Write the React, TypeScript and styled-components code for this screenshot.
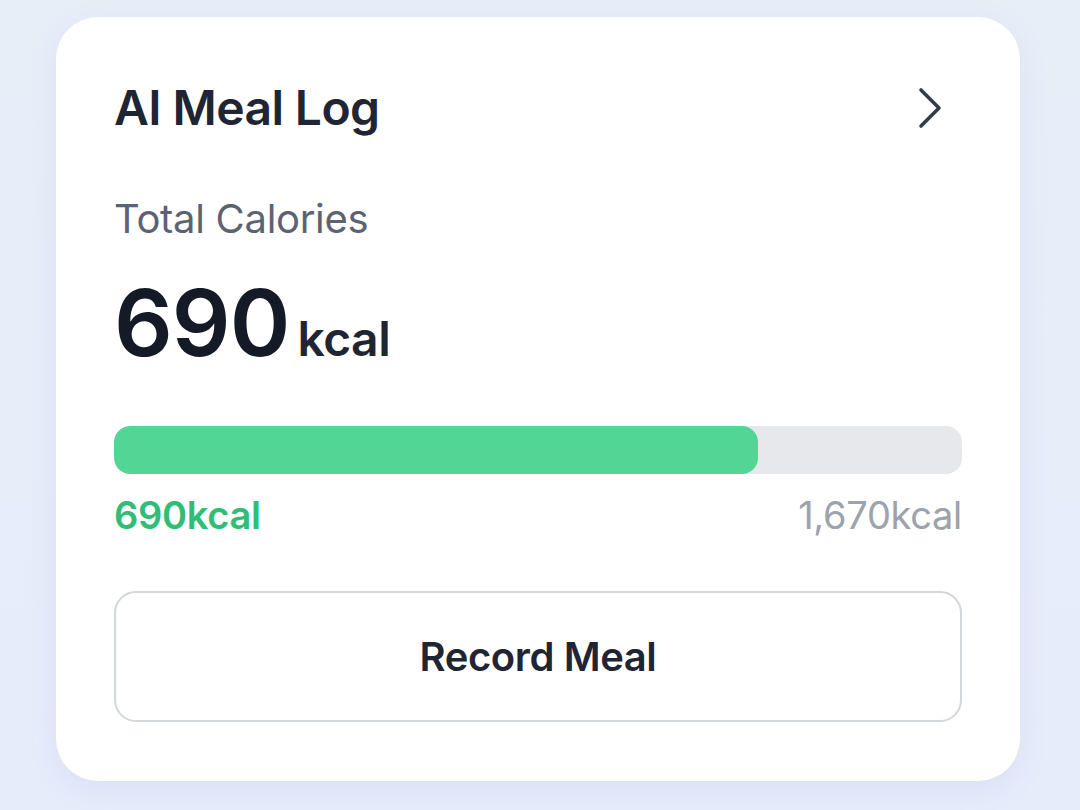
import React from "react";
import styled, { createGlobalStyle } from "styled-components";

const GlobalStyle = createGlobalStyle`
  html, body {
    margin: 0;
    padding: 0;
  }
  body {
    font-family: "Inter", "Noto Sans", sans-serif;
    background: linear-gradient(180deg, #e8eef8 0%, #e7ecfb 100%);
  }
`;

const Page = styled.div`
  width: 1080px;
  height: 810px;
  box-sizing: border-box;
  padding: 17px 60px 30px 56px;
  display: flex;
  flex-direction: column;
`;

const Card = styled.div`
  background: #ffffff;
  border-radius: 42px;
  box-shadow: 0 8px 28px rgba(120, 140, 200, 0.12);
  padding: 58px 58px 59px 58px;
  display: flex;
  flex-direction: column;
`;

const Header = styled.div`
  display: flex;
  justify-content: space-between;
  align-items: center;
  height: 64px;
`;

const Title = styled.h1`
  margin: 0;
  font-size: 48px;
  font-weight: 600;
  color: #1f2533;
  letter-spacing: -0.6px;
`;

const ChevronButton = styled.button`
  border: none;
  background: none;
  padding: 2px 0 0;
  margin-right: 20px;
  display: flex;
  color: #343b4c;
  cursor: pointer;
`;

const Label = styled.div`
  margin-top: 56px;
  font-size: 40px;
  color: #5b6373;
  line-height: 48px;
  letter-spacing: -0.3px;
`;

const ValueRow = styled.div`
  display: flex;
  align-items: baseline;
  gap: 8px;
  margin-top: 30px;
  color: #141a26;
`;

const Big = styled.span`
  font-size: 92px;
  font-weight: 600;
  line-height: 100px;
  letter-spacing: -1px;
`;

const Unit = styled.span`
  font-size: 48px;
  font-weight: 600;
  color: #1f2533;
  letter-spacing: -0.5px;
`;

const Track = styled.div`
  margin-top: 53px;
  height: 48px;
  border-radius: 16px;
  background: #e7e8eb;
  overflow: hidden;
`;

const Fill = styled.div`
  height: 100%;
  border-radius: 16px;
  background: #52d595;
`;

const Legend = styled.div`
  display: flex;
  justify-content: space-between;
  margin-top: 18px;
  font-size: 38px;
  line-height: 46px;
  letter-spacing: -0.3px;
`;

const Consumed = styled.span`
  color: #31bd77;
  font-weight: 600;
`;

const Goal = styled.span`
  color: #9ca2ae;
`;

const RecordButton = styled.button`
  margin-top: 53px;
  height: 131px;
  border: 2px solid #d3d6db;
  border-radius: 22px;
  background: #ffffff;
  font-family: inherit;
  font-size: 40px;
  font-weight: 600;
  letter-spacing: -0.4px;
  color: #1f2533;
  cursor: pointer;
`;

const consumed = 690;
const fillPct = 75.9;

export default function App() {
  return (
    <>
      <GlobalStyle />
      <Page>
        <Card>
          <Header>
            <Title>AI Meal Log</Title>
            <ChevronButton aria-label="Open">
              <svg width="24" height="42" viewBox="0 0 24 42" fill="none">
                <path
                  d="M3 3 L21 21 L3 39"
                  stroke="currentColor"
                  strokeWidth="3.6"
                  strokeLinecap="round"
                  strokeLinejoin="round"
                />
              </svg>
            </ChevronButton>
          </Header>
          <Label>Total Calories</Label>
          <ValueRow>
            <Big>{consumed}</Big>
            <Unit>kcal</Unit>
          </ValueRow>
          <Track>
            <Fill style={{ width: `${fillPct}%` }} />
          </Track>
          <Legend>
            <Consumed>690kcal</Consumed>
            <Goal>1,670kcal</Goal>
          </Legend>
          <RecordButton>Record Meal</RecordButton>
        </Card>
      </Page>
    </>
  );
}
